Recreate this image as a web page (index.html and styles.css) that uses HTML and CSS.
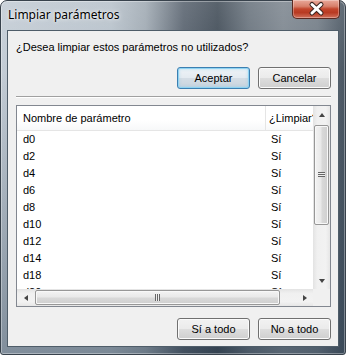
FILE: index.html
```html
<!DOCTYPE html>
<html>
<head>
    <title>Limpiar parámetros</title>
    <link rel="stylesheet" href="styles.css">
</head>
<body>
    <div class="window">
        <!-- Title bar -->
        <div class="titlebar">
            <span class="title">Limpiar parámetros</span>
            <div class="close">
                <svg width="46" height="17" viewBox="0 0 46 17">
                    <path d="M19 4.5 L28 13 M28 4.5 L19 13" stroke="#3a2420" stroke-width="5" stroke-linecap="round"/>
                    <path d="M19 4.5 L28 13 M28 4.5 L19 13" stroke="#ffffff" stroke-width="3" stroke-linecap="round"/>
                </svg>
            </div>
        </div>

        <div class="client">
            <p class="question">¿Desea limpiar estos parámetros no utilizados?</p>

            <div class="actions top">
                <button class="btn default">Aceptar</button>
                <button class="btn">Cancelar</button>
            </div>

            <div class="separator"></div>

            <!-- List of parameters -->
            <div class="listview">
                <div class="list-main">
                    <div class="list-header">
                        <div class="col-name">Nombre de parámetro</div>
                        <div class="col-clean">¿Limpiar?</div>
                    </div>
                    <div class="row"><div class="cell-name">d0</div><div class="cell-clean">Sí</div></div>
                    <div class="row"><div class="cell-name">d2</div><div class="cell-clean">Sí</div></div>
                    <div class="row"><div class="cell-name">d4</div><div class="cell-clean">Sí</div></div>
                    <div class="row"><div class="cell-name">d6</div><div class="cell-clean">Sí</div></div>
                    <div class="row"><div class="cell-name">d8</div><div class="cell-clean">Sí</div></div>
                    <div class="row"><div class="cell-name">d10</div><div class="cell-clean">Sí</div></div>
                    <div class="row"><div class="cell-name">d12</div><div class="cell-clean">Sí</div></div>
                    <div class="row"><div class="cell-name">d14</div><div class="cell-clean">Sí</div></div>
                    <div class="row"><div class="cell-name">d18</div><div class="cell-clean">Sí</div></div>
                    <div class="row"><div class="cell-name">d20</div><div class="cell-clean">Sí</div></div>
                </div>

                <div class="vscroll">
                    <div class="arrow-box"><span class="tri up"></span></div>
                    <div class="thumb v"><span class="grip"></span></div>
                    <div class="arrow-box"><span class="tri down"></span></div>
                </div>

                <div class="hscroll">
                    <div class="arrow-box"><span class="tri left"></span></div>
                    <div class="thumb h"><span class="grip"></span></div>
                    <div class="arrow-box"><span class="tri right"></span></div>
                </div>

                <div class="corner"></div>
            </div>

            <div class="actions bottom">
                <button class="btn">Sí a todo</button>
                <button class="btn">No a todo</button>
            </div>
        </div>
    </div>
</body>
</html>
```

FILE: styles.css
```css
body {
    margin: 0;
    font-family: "Liberation Sans", Arial, sans-serif;
    font-size: 11px;
    color: #000;
}
.window {
    width: 346px;
    height: 355px;
    box-sizing: border-box;
    border: 1px solid #38424c;
    border-radius: 7px 7px 3px 3px;
    background:
        linear-gradient(180deg, rgba(255,255,255,0.12) 0%, rgba(255,255,255,0) 20%, rgba(30,50,70,0.4) 100%),
        linear-gradient(90deg, #c3ccd5 0%, #b8c2cb 32%, #a0aab3 42%, #5a6470 53%, #434e59 63%, #6a747e 72%, #7e8790 82%, #737d87 92%, #4a5662 100%);
    box-shadow: inset 0 0 0 1px rgba(255,255,255,0.35);
    display: flex;
    flex-direction: column;
}
.titlebar {
    height: 29px;
    display: flex;
    align-items: flex-start;
    padding-left: 7px;
}
.title {
    font-family: "Noto Sans", "Liberation Sans", sans-serif;
    font-size: 12px;
    line-height: 28px;
    color: #000;
    text-shadow: 0 0 5px rgba(255,255,255,0.9), 0 0 2px rgba(255,255,255,0.8);
}
.close {
    margin-left: auto;
    margin-right: 5px;
    margin-top: -1px;
    width: 48px;
    height: 19px;
    box-sizing: border-box;
    border: 1px solid #5a2a22;
    border-top: none;
    border-radius: 0 0 5px 5px;
    background: linear-gradient(180deg, #e9a99a 0%, #d7806b 35%, #c2452c 50%, #b83a22 70%, #d0715c 100%);
    box-shadow: inset 0 0 0 1px rgba(255,255,255,0.3);
}
.close svg {
    display: block;
}
.client {
    margin: 0 6px 7px;
    height: 317px;
    box-sizing: border-box;
    border: 1px solid #4f5d69;
    background: #f0f0f0;
    padding: 0 7px 0 8px;
    display: flex;
    flex-direction: column;
}
.question {
    margin: 10px 0 0;
    line-height: 13px;
}
.actions {
    display: flex;
    justify-content: flex-end;
    gap: 8px;
}
.actions.top {
    margin-top: 13px;
}
.actions.bottom {
    margin-top: 11px;
}
.btn {
    width: 73px;
    height: 22px;
    box-sizing: border-box;
    padding: 0;
    border: 1px solid #707070;
    border-radius: 3px;
    background: linear-gradient(180deg, #f2f2f2 0%, #ebebeb 48%, #dddddd 52%, #cfcfcf 100%);
    box-shadow: inset 0 0 0 1px #fbfbfb;
    font-family: "Liberation Sans", Arial, sans-serif;
    font-size: 11px;
    color: #000;
}
.btn.default {
    border-color: #3c7fb1;
    background: linear-gradient(180deg, #eef3f7 0%, #e4ebf1 48%, #d4dde5 52%, #c9d4de 100%);
    box-shadow: inset 0 0 0 1px #8fd3f2, inset 0 0 3px 1px rgba(120,200,240,0.5);
}
.separator {
    margin-top: 7px;
    height: 0;
    border-top: 1px solid #a0a0a0;
    border-bottom: 1px solid #ffffff;
}
.listview {
    margin-top: 7px;
    height: 202px;
    box-sizing: border-box;
    border: 1px solid #828790;
    background: #fff;
    display: grid;
    grid-template-columns: 296px 17px;
    grid-template-rows: 183px 17px;
}
.list-main {
    overflow: hidden;
}
.list-header {
    height: 24px;
    line-height: 24px;
    display: flex;
    border-bottom: 1px solid #e5e5e5;
    background: linear-gradient(180deg, #ffffff 0%, #ffffff 60%, #f7f8f9 100%);
    white-space: nowrap;
}
.col-name {
    flex: none;
    width: 249px;
    padding-left: 6px;
    box-sizing: border-box;
    border-right: 1px solid #e5e5e5;
}
.col-clean {
    flex: none;
    padding-left: 3px;
}
.row {
    height: 17px;
    line-height: 17px;
    display: flex;
    white-space: nowrap;
}
.cell-name {
    flex: none;
    width: 250px;
    padding-left: 6px;
    box-sizing: border-box;
}
.cell-clean {
    padding-left: 4px;
}
.vscroll,
.hscroll {
    display: flex;
    background: linear-gradient(90deg, #e3e3e3 0%, #f0f0f0 25%, #f2f2f2 75%, #e6e6e6 100%);
}
.vscroll {
    flex-direction: column;
    justify-content: space-between;
}
.hscroll {
    background: linear-gradient(180deg, #e3e3e3 0%, #f0f0f0 25%, #f2f2f2 75%, #e6e6e6 100%);
}
.arrow-box {
    width: 17px;
    height: 17px;
    flex: none;
    display: flex;
    align-items: center;
    justify-content: center;
}
.tri {
    width: 0;
    height: 0;
}
.tri.up {
    border-left: 3.5px solid transparent;
    border-right: 3.5px solid transparent;
    border-bottom: 4px solid #444;
}
.tri.down {
    border-left: 3.5px solid transparent;
    border-right: 3.5px solid transparent;
    border-top: 4px solid #444;
}
.tri.left {
    border-top: 3.5px solid transparent;
    border-bottom: 3.5px solid transparent;
    border-right: 4px solid #444;
}
.tri.right {
    border-top: 3.5px solid transparent;
    border-bottom: 3.5px solid transparent;
    border-left: 4px solid #444;
}
.thumb {
    box-sizing: border-box;
    border: 1px solid #979797;
    border-radius: 2px;
    display: flex;
    align-items: center;
    justify-content: center;
    box-shadow: inset 0 0 0 1px #f8f8f8;
}
.thumb.v {
    width: 15px;
    height: 100px;
    margin: 0 auto 46px;
    background: linear-gradient(90deg, #f3f3f3 0%, #e8e8e8 48%, #d9d9d9 52%, #cfcfcf 100%);
}
.thumb.h {
    width: 245px;
    height: 15px;
    margin: auto 0 auto 1px;
    background: linear-gradient(180deg, #f3f3f3 0%, #e8e8e8 48%, #d9d9d9 52%, #cfcfcf 100%);
}
.hscroll {
    justify-content: flex-start;
}
.hscroll .arrow-box:last-child {
    margin-left: auto;
}
.thumb.v .grip {
    width: 7px;
    height: 5px;
    background: repeating-linear-gradient(180deg, #666 0 1px, #eee 1px 2px);
}
.thumb.h .grip {
    width: 5px;
    height: 7px;
    background: repeating-linear-gradient(90deg, #666 0 1px, #eee 1px 2px);
}
.corner {
    background: #f0f0f0;
}
```
